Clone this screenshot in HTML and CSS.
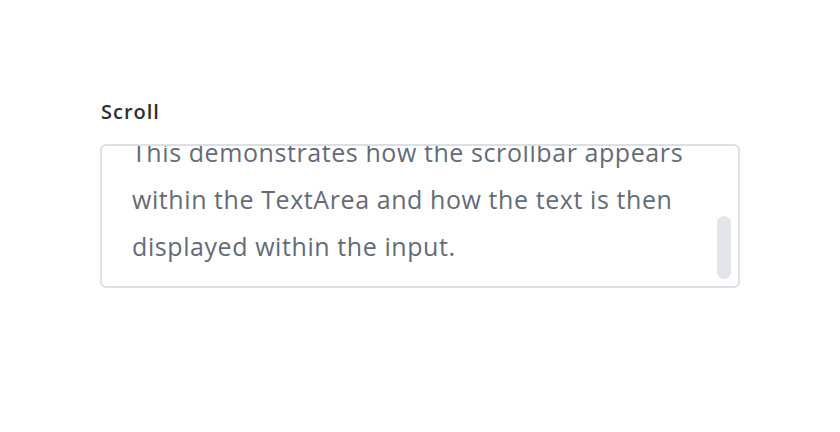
FILE: index.html
```html
<!DOCTYPE html>
<html>
<head>
<meta charset="utf-8">
<link rel="stylesheet" href="styles.css">
</head>
<body>
  <div class="field">
    <label class="label">Scroll</label>
    <div class="textarea">
      <div class="content">This demonstrates how the scrollbar appears within the TextArea and how the text is then displayed within the input.</div>
      <div class="thumb"></div>
    </div>
  </div>
</body>
</html>
```
FILE: styles.css
```css
html, body {
  margin: 0;
  padding: 0;
  background: #ffffff;
}
body {
  padding: 100px 100px 0 100px;
  font-family: "Open Sans", Lato, sans-serif;
}
.field {
  width: 640px;
  display: flex;
  flex-direction: column;
}
.label {
  font-size: 20px;
  line-height: 24px;
  font-weight: 600;
  letter-spacing: 1px;
  color: #2c2f33;
  padding-left: 1px;
  margin-bottom: 20px;
}
.textarea {
  position: relative;
  box-sizing: border-box;
  height: 144px;
  border: 2px solid #dcdfe4;
  border-radius: 6px;
  overflow: hidden;
  padding: 0 40px 0 30px;
}
.content {
  margin-top: -17px;
  font-size: 25px;
  line-height: 47px;
  letter-spacing: 0.58px;
  color: #646b76;
}
.thumb {
  position: absolute;
  right: 7px;
  bottom: 7px;
  width: 14px;
  height: 63px;
  border-radius: 7px;
  background: #e2e5e9;
}
```
